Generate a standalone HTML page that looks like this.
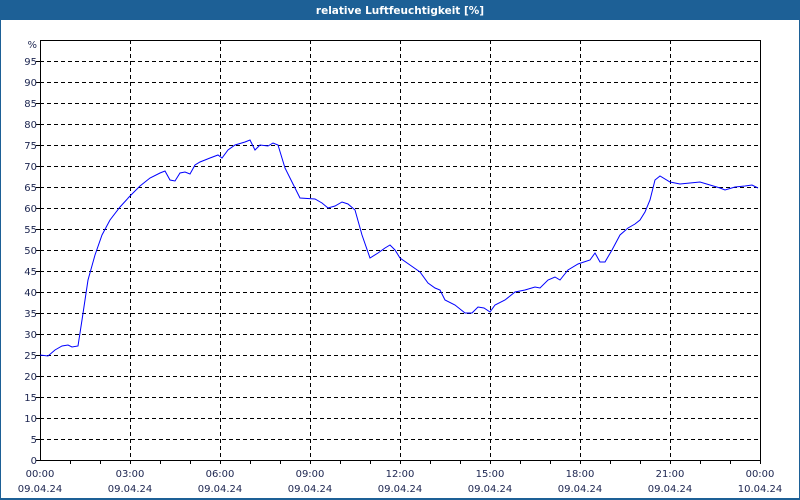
<!DOCTYPE html>
<html><head><style>
html,body{margin:0;padding:0;width:800px;height:500px;overflow:hidden;background:#fff}
svg{display:block}
text{font-family:"DejaVu Sans","Liberation Sans",sans-serif;font-size:10px;fill:#1c2550}
</style></head><body>
<svg width="800" height="500" xmlns="http://www.w3.org/2000/svg">
<rect x="0" y="0" width="800" height="500" fill="#1d6096"/>
<rect x="1" y="20" width="798" height="478" fill="#fff"/>
<text x="400" y="14" text-anchor="middle" style="fill:#fff;font-weight:bold;font-size:10.5px">relative Luftfeuchtigkeit [%]</text>
<g stroke="#000" stroke-width="1" stroke-dasharray="4,3" shape-rendering="crispEdges">
<path d="M40 61.5H760M40 82.5H760M40 103.5H760M40 124.5H760M40 145.5H760M40 166.5H760M40 187.5H760M40 208.5H760M40 229.5H760M40 250.5H760M40 271.5H760M40 292.5H760M40 313.5H760M40 334.5H760M40 355.5H760M40 376.5H760M40 397.5H760M40 418.5H760M40 439.5H760"/>
<path d="M130.5 40V460M220.5 40V460M310.5 40V460M400.5 40V460M490.5 40V460M580.5 40V460M670.5 40V460"/>
</g>
<g stroke="#000" stroke-width="1" shape-rendering="crispEdges" fill="none">
<rect x="40.5" y="40.5" width="720" height="420"/>
<path d="M70.5 460v4M100.5 460v4M130.5 460v4M160.5 460v4M190.5 460v4M220.5 460v4M250.5 460v4M280.5 460v4M310.5 460v4M340.5 460v4M370.5 460v4M400.5 460v4M430.5 460v4M460.5 460v4M490.5 460v4M520.5 460v4M550.5 460v4M580.5 460v4M610.5 460v4M640.5 460v4M670.5 460v4M700.5 460v4M730.5 460v4M760.5 460v4M36 61.5h4M36 82.5h4M36 103.5h4M36 124.5h4M36 145.5h4M36 166.5h4M36 187.5h4M36 208.5h4M36 229.5h4M36 250.5h4M36 271.5h4M36 292.5h4M36 313.5h4M36 334.5h4M36 355.5h4M36 376.5h4M36 397.5h4M36 418.5h4M36 439.5h4M36 460.5h4"/>
</g>
<g text-anchor="end">
<text x="37" y="48">%</text>
<text x="37" y="65">95</text><text x="37" y="86">90</text><text x="37" y="107">85</text><text x="37" y="128">80</text><text x="37" y="149">75</text><text x="37" y="170">70</text><text x="37" y="191">65</text><text x="37" y="212">60</text><text x="37" y="233">55</text><text x="37" y="254">50</text><text x="37" y="275">45</text><text x="37" y="296">40</text><text x="37" y="317">35</text><text x="37" y="338">30</text><text x="37" y="359">25</text><text x="37" y="380">20</text><text x="37" y="401">15</text><text x="37" y="422">10</text><text x="37" y="443">5</text><text x="37" y="464">0</text>
</g>
<g text-anchor="middle">
<text x="40" y="477">00:00</text><text x="40" y="492">09.04.24</text>
<text x="130" y="477">03:00</text><text x="130" y="492">09.04.24</text>
<text x="220" y="477">06:00</text><text x="220" y="492">09.04.24</text>
<text x="310" y="477">09:00</text><text x="310" y="492">09.04.24</text>
<text x="400" y="477">12:00</text><text x="400" y="492">09.04.24</text>
<text x="490" y="477">15:00</text><text x="490" y="492">09.04.24</text>
<text x="580" y="477">18:00</text><text x="580" y="492">09.04.24</text>
<text x="670" y="477">21:00</text><text x="670" y="492">09.04.24</text>
<text x="760" y="477">00:00</text><text x="760" y="492">10.04.24</text>
</g>
<polyline fill="none" stroke="#0000ff" stroke-width="1" points="40,355 48,356 55,350 62,346 68,345 72,347 78,346 82,320 88,280 95,255 102,235 110,220 120,207 130,196 140,186 150,178 160,173 165,171 170,180 175,181 180,173 185,172 190,174 195,165 200,162 210,158 218,155 222,158 228,150 235,145 245,142 250,140 255,150 260,145 268,146 273,143 278,145 285,168 292,182 300,198 315,199 322,203 328,208 335,206 342,202 348,204 355,210 362,235 370,258 378,253 385,248 390,245 395,250 400,258 410,265 420,272 428,283 435,288 440,290 445,300 455,305 465,313 472,313 478,307 484,308 490,312 495,305 505,300 515,292 525,290 535,287 540,288 548,280 555,277 560,280 568,270 578,264 590,260 595,253 600,262 605,262 612,250 620,235 628,228 635,224 640,220 645,212 650,200 655,180 660,176 670,182 680,184 690,183 700,182 710,185 720,188 725,190 735,187 745,186 752,185 758,188"/>
</svg>
</body></html>
